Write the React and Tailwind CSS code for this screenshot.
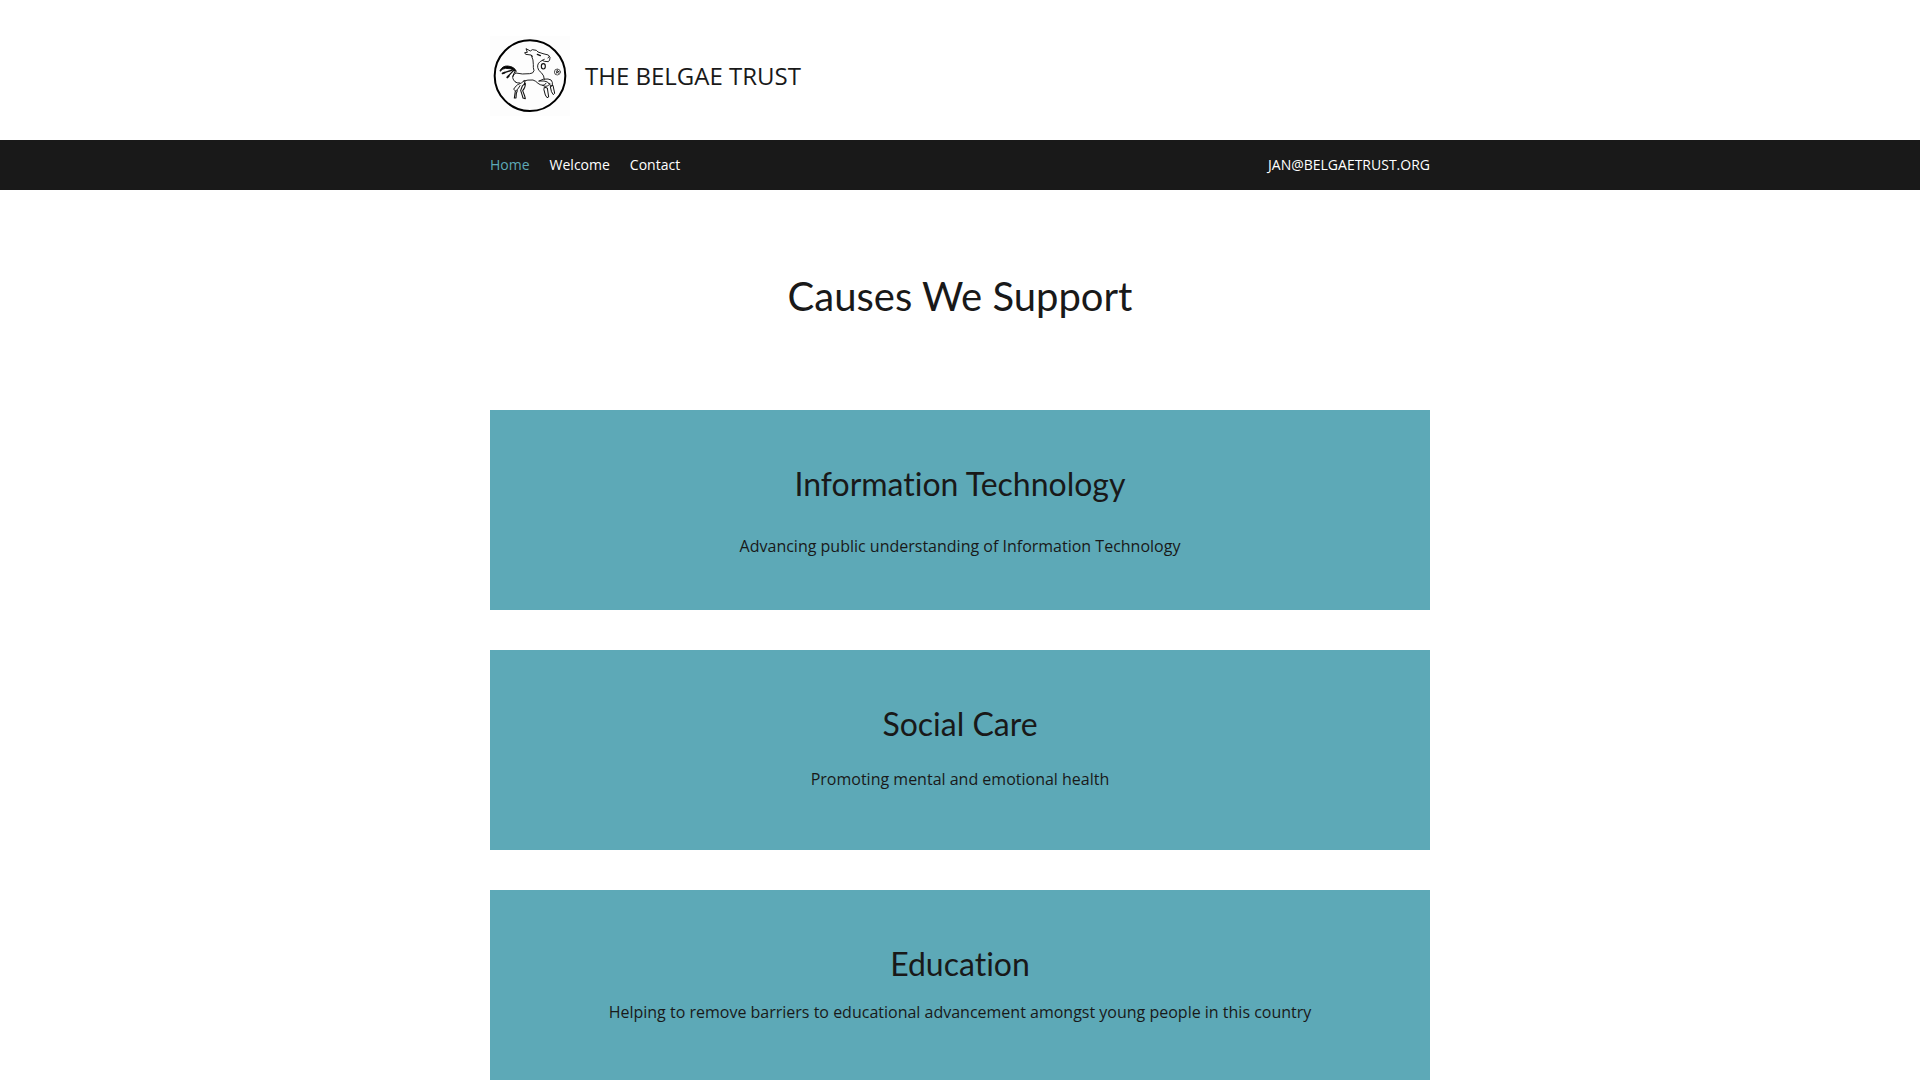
import React from 'react';

const navLinks = [
  { label: 'Home', href: '#home', active: true },
  { label: 'Welcome', href: '#welcome' },
  { label: 'Contact', href: '#contact' },
];

const causes = [
  {
    title: 'Information Technology',
    text: 'Advancing public understanding of Information Technology',
    spacing: 'mt-7',
  },
  {
    title: 'Social Care',
    text: 'Promoting mental and emotional health',
    spacing: 'mt-[21px]',
  },
  {
    title: 'Education',
    text: 'Helping to remove barriers to educational advancement amongst young people in this country',
    spacing: 'mt-[14px]',
  },
];

const Logo = () => (
  <svg
    viewBox="15 18 240 240"
    className="w-20 h-20 shrink-0 bg-[#fdfdfd]"
    fill="none"
    stroke="#111"
    strokeWidth="2.8"
    strokeLinecap="round"
    strokeLinejoin="round"
    aria-hidden="true"
  >
    <circle cx="135" cy="137" r="106" stroke="#000" strokeWidth="6" />
    {/* head, ears and muzzle */}
    <path d="M143 79 L138 75 L122 73 L119 68 L127 67 L123 56 L136 63 L142 59 L154 61 L159 66 L174 71 L190 75 L195 82 L194 90 L190 95 L178 94 L172 91 L178 88" />
    <path d="M157 73 L166 77" strokeWidth="4" />
    <path d="M192 80 L189 84" />
    {/* neck and chest */}
    <path d="M139 76 Q146 90 145 104 Q144 112 147 122 Q145 131 134 131 Q112 134 92 129" />
    <path d="M172 91 Q156 98 158 112 Q159 122 169 128 Q178 137 178 148" />
    <ellipse cx="175" cy="109" rx="6" ry="8" strokeWidth="3.4" />
    {/* back and belly */}
    <path d="M92 129 Q84 134 83 143 Q84 150 91 156" />
    <path d="M116 153 Q128 149 144 150 Q153 153 159 160 Q165 165 173 166" />
    {/* tail */}
    <path d="M45 122 Q52 107 68 108 Q88 110 94 124 Q77 113 62 115 Q53 115 46 123 Z" fill="#000" strokeWidth="3" />
    <path d="M82 120 L58 128" strokeWidth="4" />
    <path d="M59 128 L53 130" strokeWidth="6" />
    <path d="M86 121 L71 137" strokeWidth="4" />
    <path d="M71 138 L67 142" strokeWidth="6" />
    <path d="M90 124 L83 139" strokeWidth="3" />
    {/* hind legs */}
    <path d="M91 156 Q95 160 104 159 M118 152 Q110 160 98 164 Q88 172 86 178 L92 183 Q100 178 105 167" />
    <path d="M91 183 L88 204 L93 204 L94 190 L97 182" strokeWidth="3.2" />
    <path d="M120 154 Q120 163 112 168 L107 181 L112 197 L114 204 L121 206 L119 198 L113 182 Q122 172 121 160" strokeWidth="3.2" />
    {/* front legs */}
    <path d="M162 153 Q175 145 189 147 Q201 148 202 157 L202 166 L197 169 Q194 164 194 160" />
    <path d="M162 153 L177 153 Q190 154 193 163 L188 168 Q180 171 173 166 Q180 166 183 160" />
    <path d="M179 172 L187 174 L191 201 L186 203 L181 195 L177 180 Z" strokeWidth="3" />
    <path d="M197 169 L204 166 L209 190 L205 194 L200 186 Z" strokeWidth="3" />
    {/* small ring mark */}
    <circle cx="217" cy="126" r="9" strokeWidth="2" />
    <circle cx="217" cy="125" r="3" strokeWidth="2.5" />
    <path d="M213 132 L215 127 M221 131 L218 127 M217 118 V122" strokeWidth="1.5" />
  </svg>
);

const Header = () => (
  <header>
    <div className="max-w-[940px] mx-auto h-[140px] flex items-center pt-3">
      <a href="#home" className="flex items-center gap-[15px]">
        <Logo />
        <span className="text-2xl">THE BELGAE TRUST</span>
      </a>
    </div>
    <div className="bg-[#191919] text-white text-sm">
      <div className="max-w-[940px] mx-auto h-[50px] flex items-center justify-between">
        <nav className="flex gap-5">
          {navLinks.map((link) => (
            <a key={link.label} href={link.href} className={link.active ? 'text-[#5da9b7]' : 'text-white'}>
              {link.label}
            </a>
          ))}
        </nav>
        <a href="mailto:jan@belgaetrust.org">JAN@BELGAETRUST.ORG</a>
      </div>
    </div>
  </header>
);

const CauseCard = ({ title, text, spacing }) => (
  <article className="bg-[#5da9b7] h-[200px] pt-[53px] px-5 text-center">
    <h2 className="font-['Lato',sans-serif] text-[32px] leading-[42px] [font-variant-ligatures:none]">{title}</h2>
    <p className={`text-base leading-[26px] ${spacing}`}>{text}</p>
  </article>
);

const App = () => {
  return (
    <div className="bg-white text-[#191919] font-['Open_Sans',sans-serif]">
      <Header />
      <main className="max-w-[940px] mx-auto">
        <h1 className="font-['Lato',sans-serif] text-[40px] leading-[60px] text-center pt-[76px] pb-[84px]">
          Causes We Support
        </h1>
        <div className="flex flex-col gap-10">
          {causes.map((cause) => (
            <CauseCard key={cause.title} {...cause} />
          ))}
        </div>
      </main>
    </div>
  );
};

export default App;
